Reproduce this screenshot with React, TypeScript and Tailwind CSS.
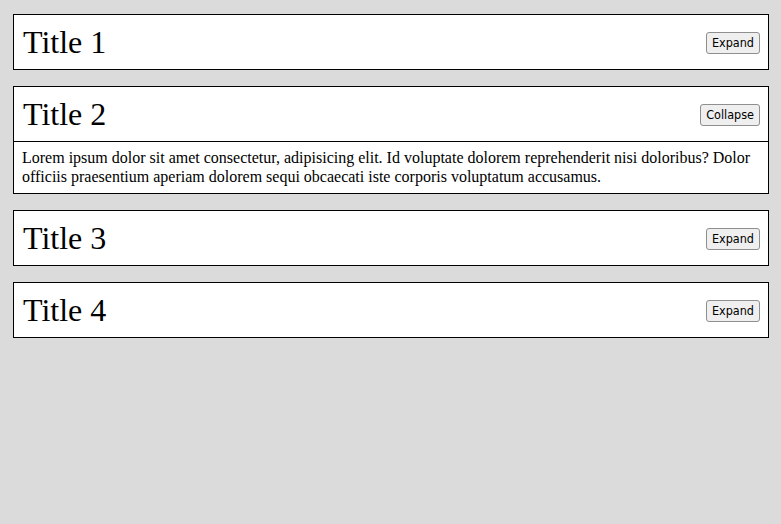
import { useState } from "react";

const items = [
  { id: 1, title: "Title 1" },
  { id: 2, title: "Title 2" },
  { id: 3, title: "Title 3" },
  { id: 4, title: "Title 4" },
];

const lorem =
  "Lorem ipsum dolor sit amet consectetur, adipisicing elit. Id voluptate dolorem reprehenderit nisi doloribus? Dolor officiis praesentium aperiam dolorem sequi obcaecati iste corporis voluptatum accusamus.";

function Panel({ title, open, onToggle }: { title: string; open: boolean; onToggle: () => void }) {
  return (
    <div className="border border-black bg-white">
      <div className="flex h-[54px] items-center justify-between pl-[9px] pr-[8px]">
        <h2 className="text-[32px] leading-none font-['Liberation_Serif',serif] text-black">{title}</h2>
        <button
          onClick={onToggle}
          className="mt-[2px] h-[22px] rounded-[3px] border border-[#8f8f8f] bg-[#efefef] px-[5px] text-[12.5px] leading-none font-['DejaVu_Sans_Condensed','Liberation_Sans',sans-serif] text-black"
        >
          {open ? "Collapse" : "Expand"}
        </button>
      </div>
      {open && (
        <p className="border-t border-black px-[8px] pt-[7px] pb-[7px] text-[16px] leading-[18.5px] font-['Liberation_Serif',serif] text-black">
          {lorem}
        </p>
      )}
    </div>
  );
}

export default function App() {
  const [open, setOpen] = useState<number | null>(2);

  return (
    <div className="min-h-[524px] bg-[#dbdbdb] pt-[14px] pl-[13px] pr-[12px]">
      <div className="flex flex-col gap-[16px]">
        {items.map((it) => (
          <Panel
            key={it.id}
            title={it.title}
            open={open === it.id}
            onToggle={() => setOpen(open === it.id ? null : it.id)}
          />
        ))}
      </div>
    </div>
  );
}
